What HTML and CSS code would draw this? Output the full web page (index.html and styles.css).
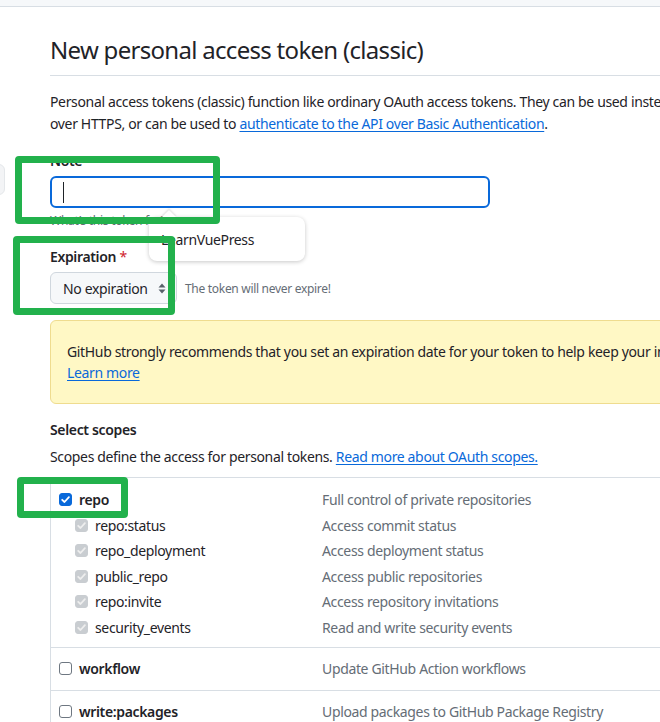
FILE: index.html
```html
<!DOCTYPE html>
<html lang="en">
<head>
<meta charset="utf-8">
<title>New personal access token (classic)</title>
<link rel="stylesheet" href="styles.css">
</head>
<body>
<div class="topbar"></div>
<div class="layout">
  <aside class="sidebar"><div class="side-item"></div></aside>
  <main class="main">
    <div class="subhead"><h2 class="subhead-title">New personal access token (classic)</h2></div>
    <p class="intro">Personal access tokens (classic) function like ordinary OAuth access tokens. They can be used instead of a password for Git<br>over HTTPS, or can be used to <a href="#" class="link">authenticate to the API over Basic Authentication</a>.</p>

    <div class="field">
      <label class="label">Note</label>
      <div class="input"><span class="caret"></span></div>
      <p class="hint">What’s this token for?</p>
    </div>

    <div class="field field-exp">
      <label class="label">Expiration <span class="req">*</span></label>
      <div class="exp-row">
        <div class="select"><span class="select-text">No expiration</span>
          <svg class="updown" width="8" height="11" viewBox="0 0 8 11"><path d="M4 0.5 L7.5 4.5 H0.5 Z M4 10.5 L7.5 6.5 H0.5 Z" fill="#57606a"/></svg>
        </div>
        <span class="exp-note">The token will never expire!</span>
      </div>
    </div>

    <div class="banner">GitHub strongly recommends that you set an expiration date for your token to help keep your information secure.<br><a href="#" class="link">Learn more</a></div>

    <div class="scopes-head">
      <div class="scopes-title">Select scopes</div>
      <p class="scopes-desc">Scopes define the access for personal tokens. <a href="#" class="link">Read more about OAuth scopes.</a></p>
    </div>

    <div class="scopes">
      <div class="group">
        <div class="row"><span class="name top"><span class="cb on"><svg width="13" height="13" viewBox="0 0 13 13"><path d="M3.2 6.8 L5.5 9 L9.9 4.2" fill="none" stroke="#fff" stroke-width="1.8" stroke-linecap="round" stroke-linejoin="round"/></svg></span>repo</span><span class="desc">Full control of private repositories</span></div>
        <div class="row"><span class="name sub"><span class="cb dis"><svg width="13" height="13" viewBox="0 0 13 13"><path d="M3.2 6.8 L5.5 9 L9.9 4.2" fill="none" stroke="#eee" stroke-width="1.8" stroke-linecap="round" stroke-linejoin="round"/></svg></span>repo:status</span><span class="desc">Access commit status</span></div>
        <div class="row"><span class="name sub"><span class="cb dis"><svg width="13" height="13" viewBox="0 0 13 13"><path d="M3.2 6.8 L5.5 9 L9.9 4.2" fill="none" stroke="#eee" stroke-width="1.8" stroke-linecap="round" stroke-linejoin="round"/></svg></span>repo_deployment</span><span class="desc">Access deployment status</span></div>
        <div class="row"><span class="name sub"><span class="cb dis"><svg width="13" height="13" viewBox="0 0 13 13"><path d="M3.2 6.8 L5.5 9 L9.9 4.2" fill="none" stroke="#eee" stroke-width="1.8" stroke-linecap="round" stroke-linejoin="round"/></svg></span>public_repo</span><span class="desc">Access public repositories</span></div>
        <div class="row"><span class="name sub"><span class="cb dis"><svg width="13" height="13" viewBox="0 0 13 13"><path d="M3.2 6.8 L5.5 9 L9.9 4.2" fill="none" stroke="#eee" stroke-width="1.8" stroke-linecap="round" stroke-linejoin="round"/></svg></span>repo:invite</span><span class="desc">Access repository invitations</span></div>
        <div class="row"><span class="name sub"><span class="cb dis"><svg width="13" height="13" viewBox="0 0 13 13"><path d="M3.2 6.8 L5.5 9 L9.9 4.2" fill="none" stroke="#eee" stroke-width="1.8" stroke-linecap="round" stroke-linejoin="round"/></svg></span>security_events</span><span class="desc">Read and write security events</span></div>
      </div>
      <div class="group">
        <div class="row"><span class="name top"><span class="cb"></span>workflow</span><span class="desc">Update GitHub Action workflows</span></div>
      </div>
      <div class="group">
        <div class="row"><span class="name top"><span class="cb"></span>write:packages</span><span class="desc">Upload packages to GitHub Package Registry</span></div>
      </div>
    </div>

    <div class="autofill"><span class="autofill-arrow"></span>LearnVuePress</div>
  </main>
</div>

<div class="mark mark-note"></div>
<div class="mark mark-exp"></div>
<div class="mark mark-repo"></div>
</body>
</html>
```
FILE: styles.css
```css
html, body {
  margin: 0;
  padding: 0;
}
body {
  position: relative;
  width: 660px;
  height: 722px;
  overflow: hidden;
  background: #ffffff;
  color: #1f2328;
  font-family: "Noto Sans", "Open Sans", sans-serif;
  font-size: 14px;
  line-height: 21px;
  letter-spacing: -0.35px;
}
.topbar {
  height: 6px;
  background: #f6f8fa;
  border-bottom: 1px solid #d8dee4;
}
.layout {
  display: flex;
}
.sidebar {
  width: 0;
  flex: none;
}
.side-item {
  margin-top: 157px;
  margin-left: -200px;
  width: 203px;
  height: 29px;
  background: #f3f4f6;
  border: 1px solid #e4e7ea;
  border-radius: 6px;
}
.main {
  position: relative;
  flex: none;
  width: 900px;
  padding: 25px 0 40px 50px;
}
.subhead {
  border-bottom: 1px solid #d8dee4;
  padding-bottom: 7px;
}
.subhead-title {
  margin: 0;
  font-size: 24px;
  line-height: 36px;
  font-weight: 400;
  letter-spacing: -0.7px;
}
.intro {
  margin: 15px 0 0;
  line-height: 22px;
  white-space: nowrap;
}
.link {
  color: #0969da;
  text-decoration: underline;
  text-underline-offset: 2px;
}
.field {
  margin-top: 15px;
}
.label {
  display: block;
  font-weight: 600;
  line-height: 21px;
}
.req {
  color: #cf222e;
  font-weight: 400;
}
.input {
  box-sizing: border-box;
  margin-top: 5px;
  width: 440px;
  height: 32px;
  border: 2px solid #0969da;
  border-radius: 6px;
  padding: 5px 11px;
  display: flex;
  align-items: center;
}
.caret {
  width: 1px;
  height: 21px;
  background: #1f2328;
}
.hint {
  margin: 4px 0 0;
  font-size: 12px;
  line-height: 18px;
  letter-spacing: -0.25px;
  color: #656d76;
}
.field-exp {
  margin-top: 16px;
}
.exp-row {
  margin-top: 5px;
  display: flex;
  align-items: center;
  gap: 8px;
}
.select {
  box-sizing: border-box;
  height: 32px;
  width: 127px;
  flex: none;
  display: flex;
  align-items: center;
  justify-content: space-between;
  padding: 0 10px 0 12px;
  background: #f6f8fa;
  border: 1px solid #d0d7de;
  border-radius: 6px;
  font-size: 14px;
  white-space: nowrap;
}
.exp-note {
  font-size: 12px;
  letter-spacing: -0.3px;
  color: #656d76;
  white-space: nowrap;
}
.banner {
  margin-top: 16px;
  padding: 20px 16px;
  background: #fff8c5;
  border: 1px solid #efdc8f;
  border-radius: 6px;
  white-space: nowrap;
}
.scopes-head {
  margin-top: 15px;
}
.scopes-title {
  font-weight: 600;
}
.scopes-desc {
  margin: 6px 0 0;
}
.scopes {
  margin-top: 10px;
  border-top: 1px solid #d8dee4;
  border-left: 1px solid #d8dee4;
}
.group {
  padding: 9px 0 7px;
  border-bottom: 1px solid #d8dee4;
}
.group + .group {
  padding-top: 8px;
  padding-bottom: 8px;
}
.row {
  display: flex;
  align-items: center;
  height: 25.5px;
}
.name {
  display: flex;
  align-items: center;
  flex: none;
  white-space: nowrap;
}
.name.top {
  padding-left: 8px;
  width: 263px;
  font-weight: 600;
}
.name.sub {
  padding-left: 24px;
  width: 247px;
}
.cb {
  box-sizing: border-box;
  width: 13px;
  height: 13px;
  margin-right: 7px;
  border: 1px solid #6e7781;
  border-radius: 3px;
  background: #fff;
  flex: none;
  display: flex;
}
.cb svg {
  display: block;
  margin: -1px;
}
.cb.on {
  background: #0969da;
  border-color: #0969da;
}
.cb.dis {
  background: #c9cdd1;
  border-color: #c9cdd1;
}
.desc {
  color: #656d76;
  white-space: nowrap;
}
.autofill {
  position: absolute;
  left: 149px;
  top: 210px;
  width: 156px;
  height: 44px;
  box-sizing: border-box;
  padding-left: 12px;
  display: flex;
  align-items: center;
  background: #fff;
  border-radius: 8px;
  box-shadow: 0 1px 4px rgba(0, 0, 0, 0.22);
  font-size: 14px;
}
.autofill-arrow {
  position: absolute;
  left: 15px;
  top: -5px;
  width: 10px;
  height: 10px;
  background: #fff;
  transform: rotate(45deg);
  box-shadow: -1px -1px 2px rgba(0, 0, 0, 0.12);
}
.mark {
  position: absolute;
  border: 7px solid #22b14c;
  border-radius: 4px;
  box-sizing: border-box;
}
.mark-note {
  left: 15px;
  top: 156px;
  width: 205px;
  height: 68px;
}
.mark-exp {
  left: 13px;
  top: 236px;
  width: 162px;
  height: 79px;
}
.mark-repo {
  left: 17px;
  top: 477px;
  width: 111px;
  height: 41px;
}
```
